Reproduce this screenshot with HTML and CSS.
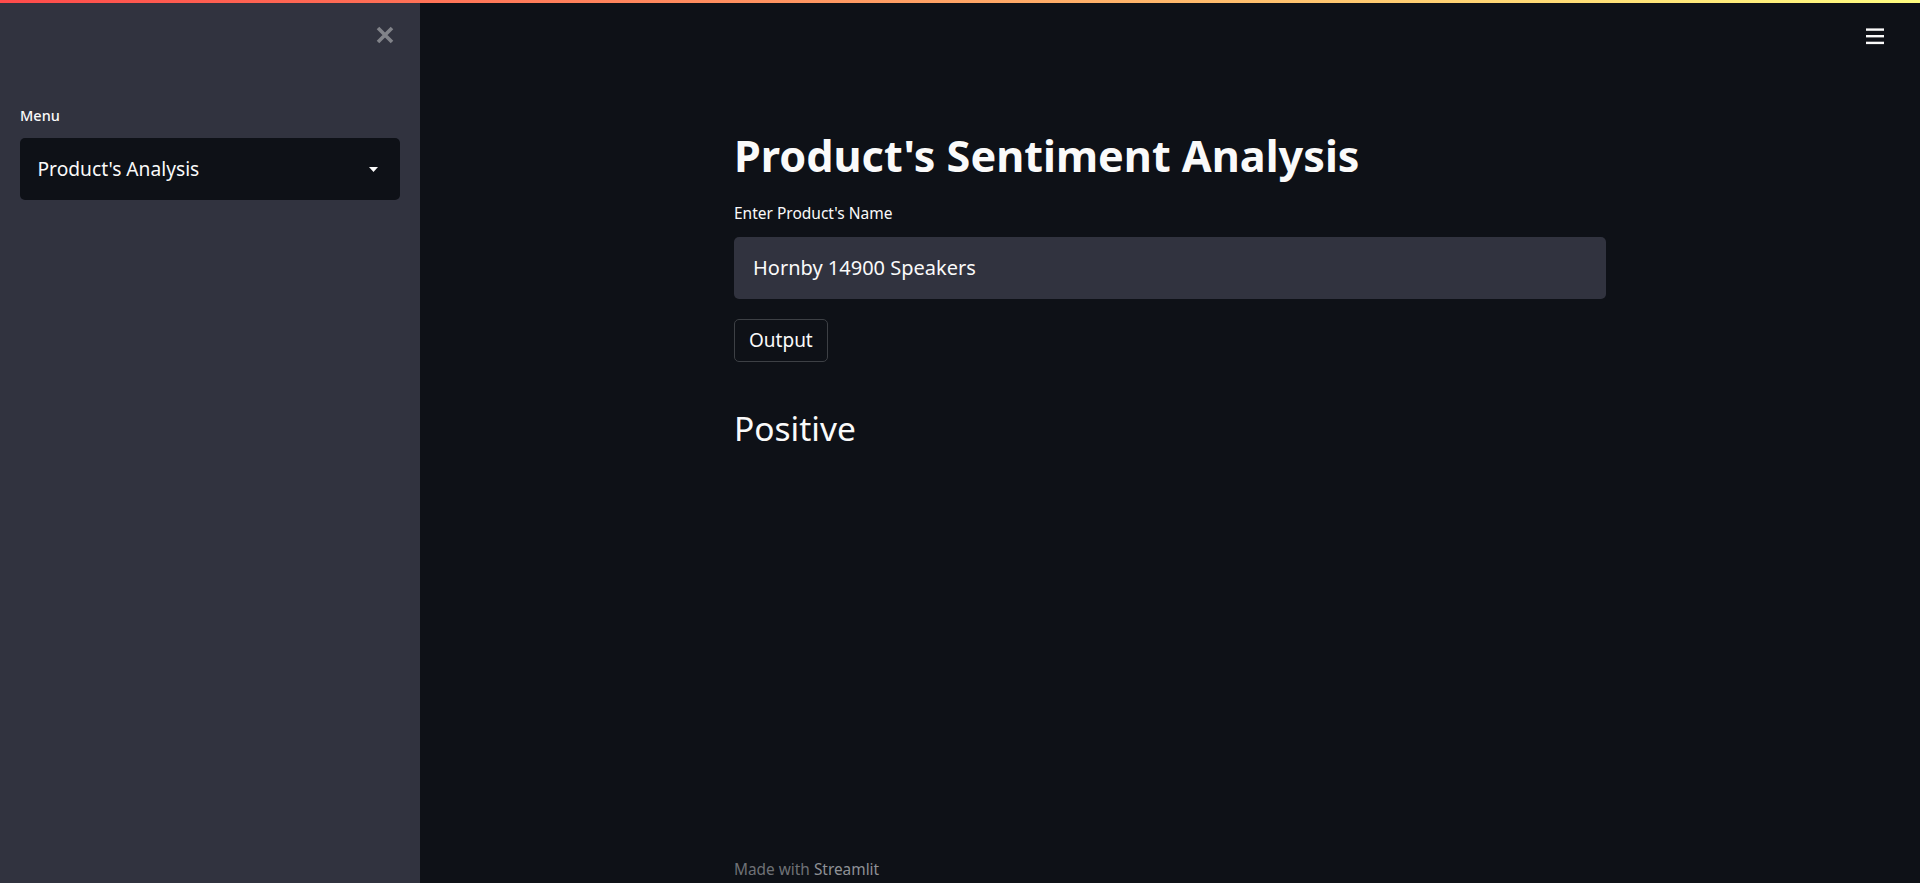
FILE: index.html
```html
<!DOCTYPE html>
<html lang="en">
<head>
<meta charset="utf-8">
<title>Product's Sentiment Analysis</title>
<link rel="stylesheet" href="styles.css">
</head>
<body>
<div class="decoration"></div>
<div class="app">
  <aside class="sidebar">
    <div class="sidebar-top">
      <button class="close-btn" aria-label="Close sidebar">
        <svg width="18" height="18" viewBox="0 0 18 18"><path d="M2 2 L16 16 M16 2 L2 16" stroke="#818389" stroke-width="3.6" fill="none"/></svg>
      </button>
    </div>
    <div class="sidebar-content">
      <label class="menu-label">Menu</label>
      <div class="select">
        <span class="select-value">Product's Analysis</span>
        <svg class="select-arrow" width="9" height="5" viewBox="0 0 9 5"><polygon points="0,0 9,0 4.5,5" fill="#fafafa"/></svg>
      </div>
    </div>
  </aside>
  <main class="main">
    <header class="topbar">
      <button class="menu-btn" aria-label="Main menu">
        <svg width="18" height="17" viewBox="0 0 18 17"><rect x="0" y="0.4" width="18" height="2.4" fill="#fafafa"/><rect x="0" y="7" width="18" height="2.4" fill="#fafafa"/><rect x="0" y="13.7" width="18" height="2.4" fill="#fafafa"/></svg>
      </button>
    </header>
    <div class="block">
      <h1 class="title">Product's Sentiment Analysis</h1>
      <label class="field-label">Enter Product's Name</label>
      <div class="text-input">Hornby 14900 Speakers</div>
      <div class="btn-row"><button class="btn">Output</button></div>
      <h2 class="result">Positive</h2>
    </div>
    <footer class="footer">Made with <span class="footer-brand">Streamlit</span></footer>
  </main>
</div>
</body>
</html>
```

FILE: styles.css
```css
html, body {
  margin: 0;
  padding: 0;
  height: 100%;
}

body {
  background: #0e1117;
  color: #fafafa;
  font-family: "Noto Sans", "Open Sans", sans-serif;
  overflow: hidden;
}

.decoration {
  position: fixed;
  top: 0;
  left: 0;
  right: 0;
  height: 3px;
  background: linear-gradient(90deg, rgb(255, 75, 75), rgb(255, 253, 128));
  z-index: 10;
}

.app {
  display: flex;
  height: 100vh;
}

/* Sidebar */
.sidebar {
  width: 420px;
  flex-shrink: 0;
  background: #31333f;
  display: flex;
  flex-direction: column;
}

.sidebar-top {
  display: flex;
  justify-content: flex-end;
  padding: 26px 26px 0 0;
}

.close-btn,
.menu-btn {
  background: none;
  border: 0;
  padding: 0;
  margin: 0;
  display: block;
  line-height: 0;
  cursor: pointer;
}

.sidebar-content {
  padding: 61px 20px 0;
}

.menu-label {
  display: block;
  font-size: 14.5px;
  line-height: 20px;
  font-weight: 500;
  margin-bottom: 13px;
}

.select {
  box-sizing: border-box;
  height: 62px;
  background: #0e1117;
  border-radius: 5px;
  display: flex;
  align-items: center;
  justify-content: space-between;
  padding: 0 22px 0 17.5px;
}

.select-value {
  font-size: 19.2px;
  line-height: 1;
}

.select-arrow {
  display: block;
}

/* Main */
.main {
  flex: 1;
  min-width: 0;
  display: flex;
  flex-direction: column;
}

.topbar {
  box-sizing: border-box;
  height: 60px;
  display: flex;
  justify-content: flex-end;
  align-items: flex-start;
  padding: 28px 36px 0 0;
}

.block {
  flex: 1;
  width: 872px;
  margin: 0 auto;
  padding-top: 69px;
}

.title {
  margin: 0;
  font-size: 43.2px;
  line-height: 53px;
  font-weight: 700;
}

.field-label {
  display: block;
  margin-top: 21px;
  margin-bottom: 13px;
  font-size: 15.5px;
  line-height: 21px;
}

.text-input {
  box-sizing: border-box;
  height: 62px;
  background: #31333f;
  border-radius: 5px;
  padding: 0 19px;
  display: flex;
  align-items: center;
  font-size: 20px;
  line-height: 1;
}

.btn-row {
  display: flex;
  margin-top: 20px;
}

.btn {
  box-sizing: border-box;
  height: 43px;
  display: inline-flex;
  align-items: center;
  padding: 0 14px;
  border: 1px solid #3d4045;
  border-radius: 5px;
  background: #0e1117;
  color: #fafafa;
  font-family: inherit;
  font-size: 19px;
  line-height: 1;
  cursor: pointer;
}

.result {
  margin: 45.5px 0 0;
  font-size: 33.5px;
  line-height: 40px;
  font-weight: 400;
}

.footer {
  width: 872px;
  margin: 0 auto;
  padding-bottom: 3.5px;
  font-size: 15.4px;
  line-height: 21px;
  color: #6f7176;
}

.footer-brand {
  color: #8f9196;
}
```
